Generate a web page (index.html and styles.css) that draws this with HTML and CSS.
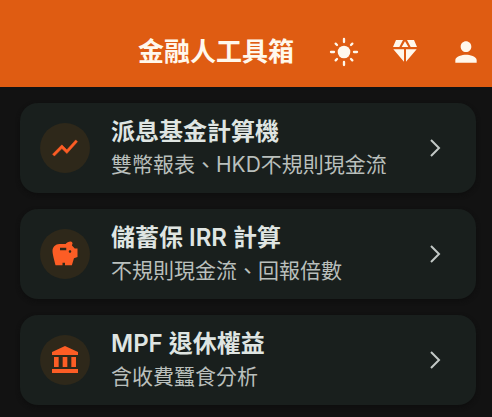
FILE: index.html
```html
<!DOCTYPE html>
<html lang="zh-Hant">
<head>
<meta charset="utf-8">
<meta name="viewport" content="width=device-width, initial-scale=1">
<title>金融人工具箱</title>
<link rel="stylesheet" href="styles.css">
</head>
<body>
<header class="bar">
  <h1 class="bar-title">金融人工具箱</h1>
  <div class="actions">
    <button class="action" type="button" aria-label="切換主題">
      <svg class="action-icon" viewBox="0 0 96 96">
        <circle cx="48" cy="48" r="19" fill="currentColor"/>
        <path d="M48 9v9M48 78v9M9 48h9M78 48h9M23 23l4 4M69 69l4 4M73 23l-4 4M27 69l-4 4" fill="none" stroke="currentColor" stroke-width="7" stroke-linecap="round"/>
      </svg>
    </button>
    <button class="action" type="button" aria-label="升級">
      <svg class="action-icon" viewBox="0 0 96 96">
        <path d="M21 12h21L31 33H12zM54 12h21l9 21H65zM48 16l10 17H38zM13 40h32v37zM51 40h32L51 77z" fill="currentColor"/>
      </svg>
    </button>
    <button class="action" type="button" aria-label="帳戶">
      <svg class="action-icon" viewBox="0 0 24 24">
        <path d="M12 12c2.210 0 4-1.790 4-4s-1.790-4-4-4-4 1.790-4 4 1.790 4 4 4zm0 2c-2.670 0-8 1.340-8 4v2h16v-2c0-2.660-5.330-4-8-4z" fill="currentColor"/>
      </svg>
    </button>
  </div>
</header>
<main class="list">
  <a class="card" href="#fund">
    <span class="badge">
      <svg class="badge-icon" viewBox="0 0 24 24"><path d="M3.500 18.490l6-6.010 4 4L22 6.920l-1.410-1.410-7.090 7.970-4-4L2 16.990z" fill="currentColor" stroke="currentColor" stroke-width=".4"/></svg>
    </span>
    <span class="text">
      <span class="name">派息基金計算機</span>
      <span class="desc">雙幣報表、HKD不規則現金流</span>
    </span>
    <svg class="chevron" viewBox="0 0 24 24"><path d="M8 4l8 8-8 8" fill="none" stroke="currentColor" stroke-width="2"/></svg>
  </a>
  <a class="card" href="#savings">
    <span class="badge">
      <svg class="badge-icon" viewBox="0 0 24 24"><path d="M19.830 7.500l-2.270-2.270c.07-.42.18-.81.32-1.150.08-.18.12-.37.12-.58 0-.83-.67-1.500-1.500-1.500-1.640 0-3.090.79-4 2h-5C4.460 4 2 6.460 2 9.500S4.500 21 4.500 21H10v-2h2v2h5.500l1.680-5.590 2.820-.94V7.500h-2.170zM13 9H8V7h5v2zm3 2c-.55 0-1-.45-1-1s.45-1 1-1 1 .45 1 1-.45 1-1 1z" fill="currentColor"/></svg>
    </span>
    <span class="text">
      <span class="name">儲蓄保 IRR 計算</span>
      <span class="desc">不規則現金流、回報倍數</span>
    </span>
    <svg class="chevron" viewBox="0 0 24 24"><path d="M8 4l8 8-8 8" fill="none" stroke="currentColor" stroke-width="2"/></svg>
  </a>
  <a class="card" href="#mpf">
    <span class="badge">
      <svg class="badge-icon" viewBox="0 0 90 90"><path d="M45 3L6 21v9h78v-9zM12 36h14v30H12zM38 36h14v30H38zM64 36h14v30H64zM6 72h78v12H6z" fill="currentColor"/></svg>
    </span>
    <span class="text">
      <span class="name">MPF 退休權益</span>
      <span class="desc">含收費蠶食分析</span>
    </span>
    <svg class="chevron" viewBox="0 0 24 24"><path d="M8 4l8 8-8 8" fill="none" stroke="currentColor" stroke-width="2"/></svg>
  </a>
</main>
</body>
</html>
```
FILE: styles.css
```css
* {
  box-sizing: border-box;
}

body {
  margin: 0;
  background: #121212;
  font-family: Inter, "Noto Sans CJK TC", sans-serif;
}

.bar {
  display: flex;
  align-items: center;
  justify-content: flex-end;
  gap: 26px;
  padding: 28px 2px 11px;
  background: #df5c12;
  color: #fff8ec;
}

.bar-title {
  margin: 0;
  font-size: 26px;
  line-height: 48px;
  font-weight: 600;
}

.actions {
  display: flex;
  gap: 13px;
}

.action {
  display: grid;
  place-items: center;
  width: 48px;
  height: 48px;
  padding: 0;
  border: 0;
  background: none;
  color: inherit;
}

.action-icon {
  width: 32px;
  height: 32px;
}

.list {
  display: grid;
  gap: 16px;
  padding: 16px 16px 12px 20px;
}

.card {
  display: flex;
  align-items: center;
  gap: 21px;
  padding: 12px 29px 12px 20px;
  border-radius: 18px;
  background: #191f1d;
  box-shadow: 0 2px 4px #0e0e0e;
  color: #dfe5e2;
  text-decoration: none;
}

.badge {
  display: grid;
  place-items: center;
  flex: none;
  width: 50px;
  height: 50px;
  border-radius: 50%;
  background: #2e281a;
  color: #fd5d25;
}

.badge-icon {
  width: 30px;
  height: 30px;
}

.text {
  display: grid;
  flex: 1;
}

.name {
  font-size: 24px;
  line-height: 34px;
  font-weight: 600;
}

.desc {
  font-size: 21px;
  line-height: 32px;
  color: #b9bfbc;
}

.chevron {
  flex: none;
  width: 24px;
  height: 24px;
  color: #c3c9c6;
}
```
